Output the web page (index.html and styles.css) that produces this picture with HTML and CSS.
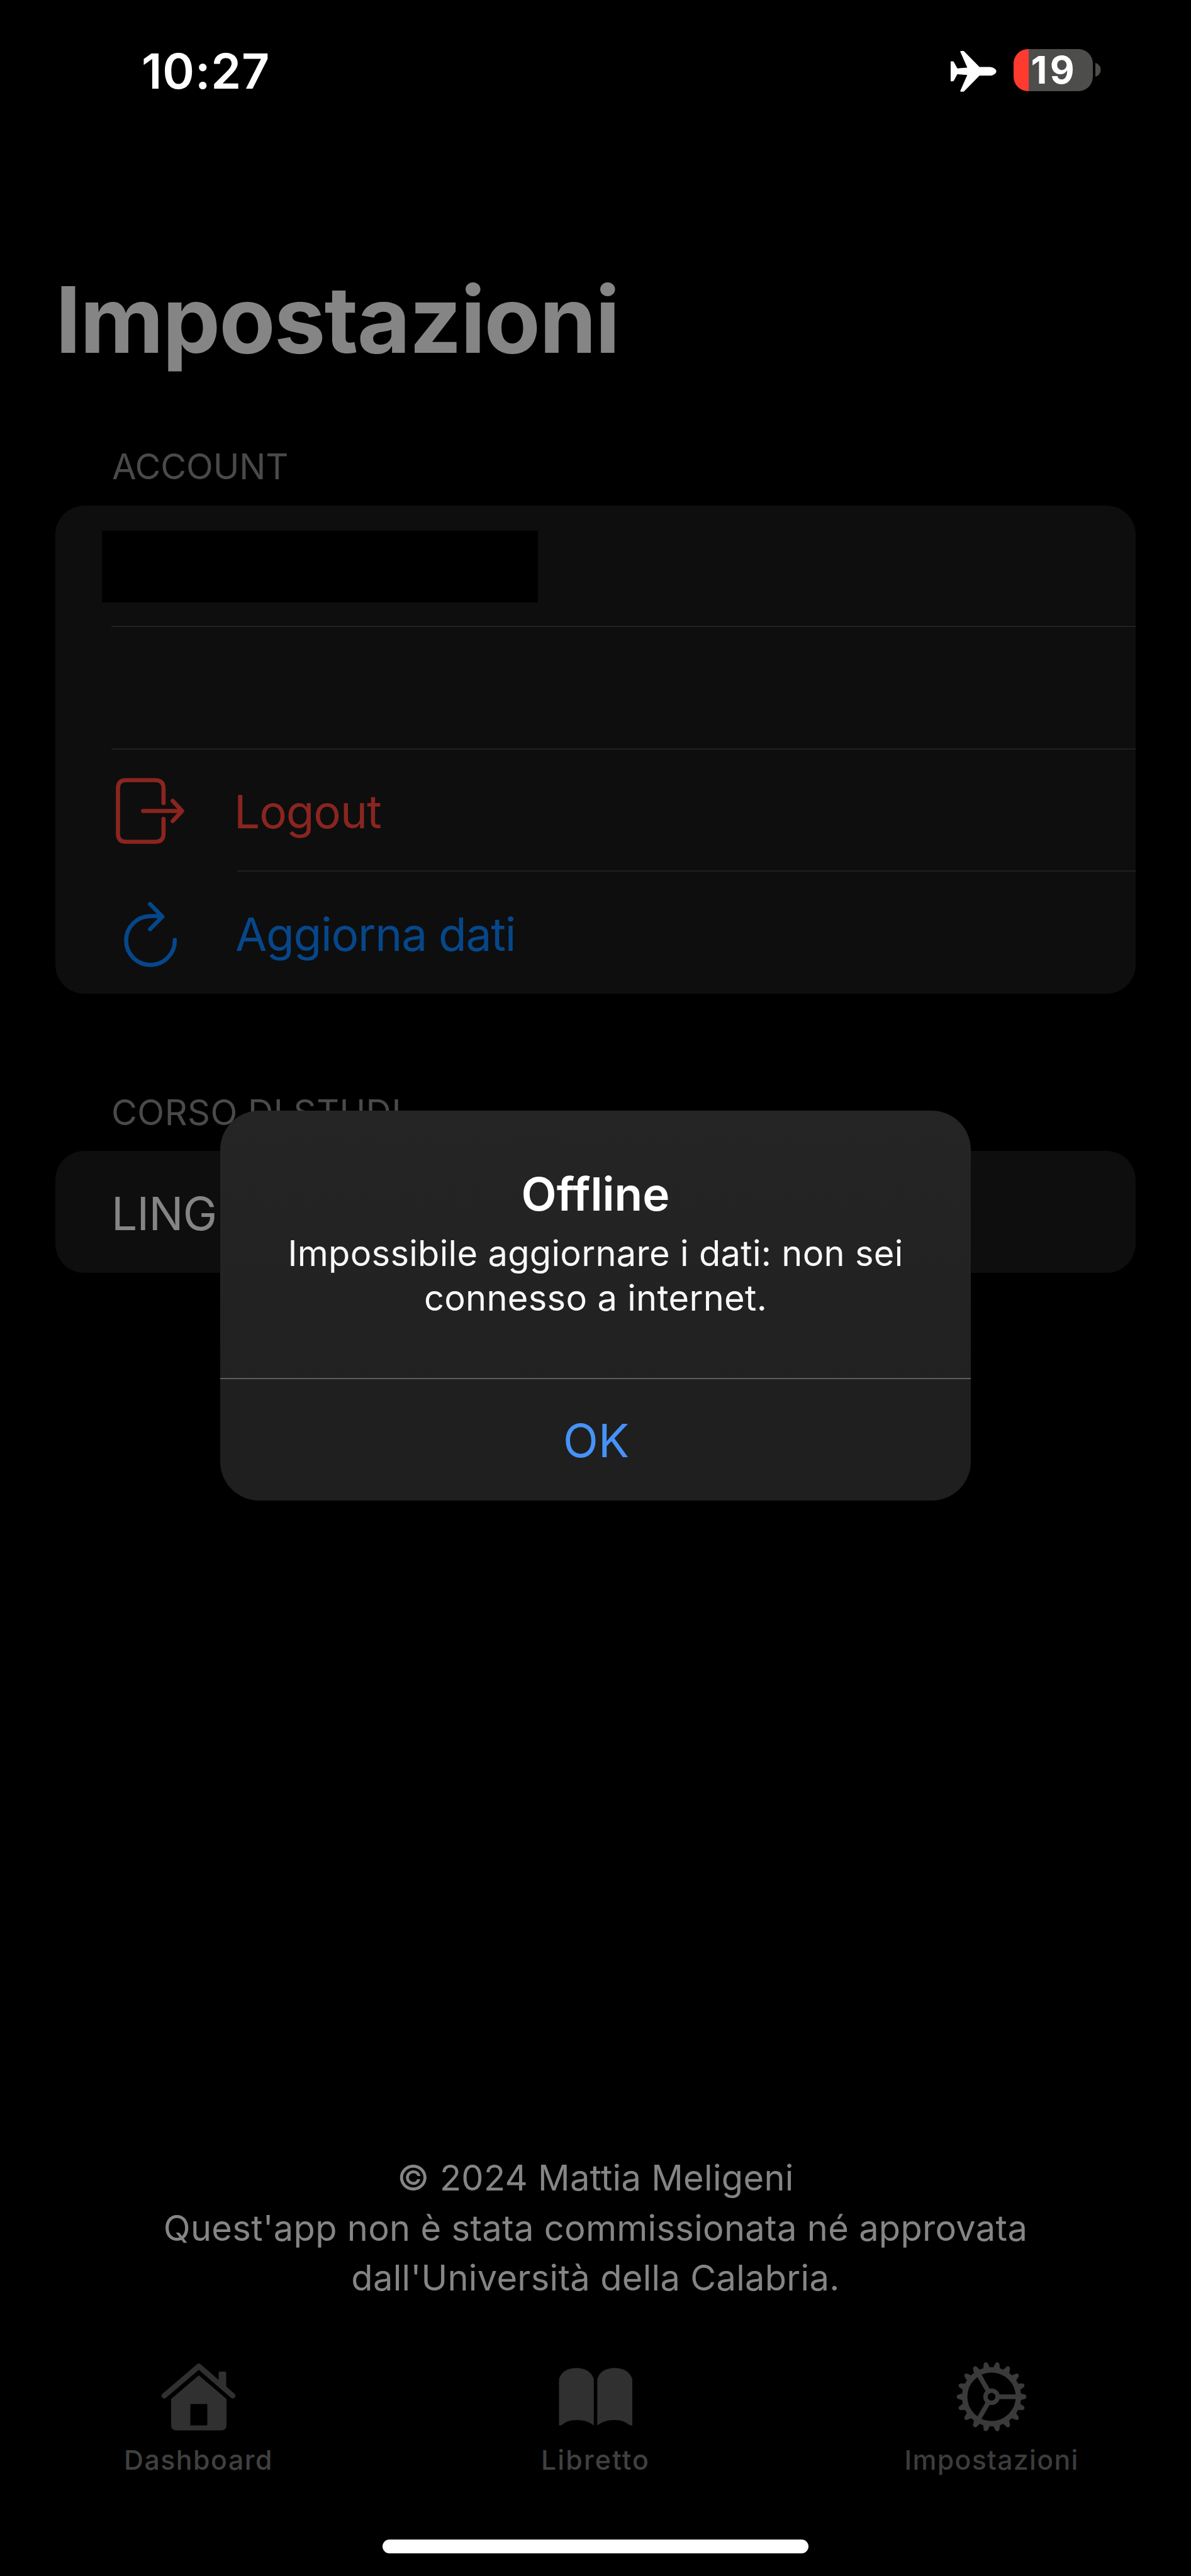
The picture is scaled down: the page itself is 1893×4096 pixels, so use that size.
FILE: index.html
```html
<!DOCTYPE html>
<html lang="it">
<head>
<meta charset="utf-8">
<title>Impostazioni</title>
<link rel="stylesheet" href="styles.css">
</head>
<body>
<div class="screen">
  <header class="status-bar">
    <span class="clock">10:27</span>
    <div class="status-icons">
      <svg class="plane" viewBox="0 0 73 65" aria-hidden="true">
        <path d="M0 16.6H3.4Q4.6 16.6 5.2 17.8L10.6 27.8L26.4 26.6L15.4 1.6Q15 0 16.6 0H19.8Q21.2 0 22 1.2L45.8 25.5H62C68 25.5 72.6 29.5 72.6 32.4C72.6 35.3 68 39.3 62 39.3H45.8L22 63.6Q21.2 64.8 19.8 64.8H16.6Q15 64.8 15.4 63.2L26.4 38.2L10.6 37L5.2 47Q4.6 48.2 3.4 48.2H0Z"/>
      </svg>
      <div class="battery"><span class="battery-level">19</span></div>
      <svg class="battery-cap" viewBox="0 0 9 22" aria-hidden="true"><path d="M0 0C5.500 2 8.500 6 8.500 11S5.500 20 0 22Z"/></svg>
    </div>
  </header>

  <main class="content">
    <h1 class="title">Impostazioni</h1>

    <h2 class="section-label account-label">ACCOUNT</h2>
    <ul class="card account-card">
      <li class="row row-name"><span class="redacted"></span></li>
      <li class="row row-empty"></li>
      <li class="row row-action logout">
        <svg class="row-icon" viewBox="0 0 120 120" aria-hidden="true">
          <path d="M82.900 57V33.500Q82.900 20.500 70 20.500H23Q10.500 20.500 10.500 33.500V105.500Q10.500 118.500 23 118.500H70Q82.900 118.500 82.900 105.500V82M50.500 69.500H112M97.500 53.500L112.500 69.500L97.500 85.500" transform="translate(0 -9)"/>
        </svg>
        <span class="row-text">Logout</span>
      </li>
      <li class="row row-action refresh">
        <svg class="row-icon" viewBox="0 0 120 120" aria-hidden="true">
          <path d="M100.800 71.500A38.700 38.700 0 1 1 62.500 33.800Q71 32.800 79.500 35.200M61.500 14.500L81 34.500L61.500 54.500"/>
        </svg>
        <span class="row-text">Aggiorna dati</span>
      </li>
    </ul>

    <h2 class="section-label course-label">CORSO DI STUDI</h2>
    <div class="card course-card"><span class="course-name">LING</span></div>
  </main>

  <footer class="credits">
    <p>© 2024 Mattia Meligeni</p>
    <p>Quest'app non è stata commissionata né approvata</p>
    <p>dall'Università della Calabria.</p>
  </footer>

  <nav class="tabs">
    <div class="tab dashboard">
      <svg viewBox="0 0 120 120" aria-hidden="true">
        <path class="line" d="M5 59.500L60 12.500L114 59.500"/>
        <path d="M91.500 38V23Q91.500 21 93.500 21H101.500Q103.500 21 103.500 23V50Z"/>
        <path fill-rule="evenodd" d="M60 27L104 64.500V106Q104 114.500 95.500 114.500H24.500Q16 114.500 16 106V64.500ZM46.500 72.500V106.500H73.500V72.500Z"/>
      </svg>
      <span>Dashboard</span>
    </div>
    <div class="tab libretto">
      <svg viewBox="0 0 120 120" aria-hidden="true">
        <path d="M1.500 33C5 21.500 15 15.300 29 15.300S53.500 21.500 56.800 33V106.400C50.500 101.500 41 98 29.500 98S11.500 101 6.500 105.500Q5.500 106.400 4 106.400H1.500Z"/>
        <path d="M62.300 33C65.500 21.500 76 15.300 90 15.300S114.500 21.500 118 33V106.400H115.500Q114 106.400 113 105.500C107.500 101 101 98 89.500 98S69 101.500 62.300 106.400Z"/>
      </svg>
      <span>Libretto</span>
    </div>
    <div class="tab settings">
      <svg viewBox="-60 -60 120 120" aria-hidden="true">
        <defs><path id="tooth" d="M44 -6L53.500 -3.200Q55.500 -2 55.500 0T53.500 3.200L44 6Z"/></defs>
        <circle class="ring" r="42.700"/>
        <circle class="hub" r="9.700"/>
        <path class="spoke" d="M12 0H40M-6 -10.400L-21 -36.400M-6 10.400L-21 36.400"/>
        <use href="#tooth"/><use href="#tooth" transform="rotate(20)"/><use href="#tooth" transform="rotate(40)"/><use href="#tooth" transform="rotate(60)"/><use href="#tooth" transform="rotate(80)"/><use href="#tooth" transform="rotate(100)"/><use href="#tooth" transform="rotate(120)"/><use href="#tooth" transform="rotate(140)"/><use href="#tooth" transform="rotate(160)"/><use href="#tooth" transform="rotate(180)"/><use href="#tooth" transform="rotate(200)"/><use href="#tooth" transform="rotate(220)"/><use href="#tooth" transform="rotate(240)"/><use href="#tooth" transform="rotate(260)"/><use href="#tooth" transform="rotate(280)"/><use href="#tooth" transform="rotate(300)"/><use href="#tooth" transform="rotate(320)"/><use href="#tooth" transform="rotate(340)"/>
      </svg>
      <span>Impostazioni</span>
    </div>
  </nav>
  <div class="home-indicator"></div>

  <div class="alert" role="alertdialog">
    <div class="alert-body">
      <h3 class="alert-title">Offline</h3>
      <p class="alert-message">Impossibile aggiornare i dati: non sei<br>connesso a internet.</p>
    </div>
    <button class="alert-button" type="button">OK</button>
  </div>
</div>
</body>
</html>
```
FILE: styles.css
```css
* {
  box-sizing: border-box;
  margin: 0;
  padding: 0;
}

body {
  background: #000;
  font-family: Inter, "Liberation Sans", sans-serif;
}

.screen {
  position: relative;
  display: flex;
  flex-direction: column;
  width: 1893px;
  height: 4096px;
  overflow: hidden;
  background: #000;
}

/* Status bar */
.status-bar {
  display: flex;
  align-items: center;
  justify-content: space-between;
  height: 226px;
  padding: 0 143px 0 225px;
  color: #fff;
}

.clock {
  font-size: 77px;
  font-weight: 600;
  letter-spacing: 0.8px;
}

.status-icons {
  display: flex;
  align-items: center;
  padding-bottom: 4px;
}

.plane {
  width: 73px;
  height: 65px;
  margin: 4px 27px 0 0;
  fill: #fff;
}

.battery {
  display: flex;
  align-items: center;
  width: 126px;
  height: 67px;
  padding-left: 27.5px;
  border-radius: 23px;
  background: linear-gradient(to right, #ff3b30 24.5px, #4d4d4c 24.5px);
}

.battery-level {
  font-size: 60px;
  font-weight: 700;
  line-height: 67px;
  letter-spacing: 4.5px;
}

.battery-cap {
  width: 9px;
  height: 22px;
  margin-left: 4px;
  fill: #4d4d4c;
}

/* Settings list */
.content {
  padding: 202px 88px 0;
}

.title {
  padding-left: 0;
  color: #858585;
  font-size: 146px;
  font-weight: 700;
  line-height: 160px;
  letter-spacing: -2.01px;
}

.section-label {
  padding-left: 90px;
  color: #4a4a4c;
  font-size: 56px;
  font-weight: 400;
  line-height: 66px;
}

.account-label {
  margin: 121px 0 29px;
  letter-spacing: -0.17px;
}

.course-label {
  margin: 156px 0 28px;
  padding-left: 89px;
  letter-spacing: 0.45px;
}

.card {
  border-radius: 46px;
  background: #0e0e0e;
  list-style: none;
}

.account-card {
  display: grid;
  grid-template-rows: 193px 195px 194px 194px;
}

.row {
  display: flex;
  align-items: center;
  margin-left: 89px;
}

.row-name,
.row-empty {
  border-bottom: 2px solid #202021;
}

.redacted {
  width: 693px;
  height: 114px;
  margin: 2px 0 0 -15px;
  background: #000;
}

.row-icon {
  width: 120px;
  height: 120px;
  flex: none;
  fill: none;
  stroke: currentColor;
  stroke-width: 6.6;
  stroke-linecap: round;
  stroke-linejoin: round;
}

.row-text {
  display: flex;
  flex: 1;
  align-items: center;
  align-self: stretch;
  margin-left: 80px;
  padding-top: 5px;
  font-size: 73px;
}

.logout {
  color: #8a2520;
}

.logout .row-text {
  border-bottom: 2px solid #202021;
  text-indent: -5px;
  letter-spacing: -1.15px;
}

.refresh {
  color: #06478a;
}

.refresh .row-text {
  text-indent: -3px;
  letter-spacing: -1.28px;
}

.course-card {
  display: flex;
  align-items: center;
  height: 194px;
  padding: 4px 0 0 89px;
}

.course-name {
  color: #858585;
  font-size: 73px;
  letter-spacing: -0.69px;
}

/* Credits and tab bar */
.credits {
  margin-top: auto;
  margin-bottom: 87px;
  color: #858585;
  font-size: 56px;
  line-height: 79.65px;
  letter-spacing: 0.3px;
  text-align: center;
}

.tabs {
  display: grid;
  grid-template-columns: repeat(3, 1fr);
  height: 188px;
}

.tab {
  display: flex;
  flex-direction: column;
  align-items: center;
  gap: 16px;
  color: #404041;
  font-size: 42.8px;
  font-weight: 500;
  line-height: 52px;
}

.tab svg {
  width: 120px;
  height: 120px;
  fill: #303030;
}

.tab .line {
  fill: none;
  stroke: #303030;
  stroke-width: 8.5;
  stroke-linecap: round;
  stroke-linejoin: round;
}

.dashboard {
  letter-spacing: 1.53px;
}

.libretto {
  letter-spacing: 2.17px;
}

.settings {
  padding-right: 3px;
  color: #3c3c3d;
  letter-spacing: 1.33px;
}

.settings svg {
  margin-top: 1px;
  margin-bottom: -1px;
  fill: #3a3a3a;
}

.ring,
.hub,
.spoke {
  fill: none;
  stroke: #3a3a3a;
  stroke-width: 8.5;
}

.hub {
  stroke-width: 7;
}

.spoke {
  stroke-width: 7.5;
}

.home-indicator {
  align-self: center;
  width: 677px;
  height: 22px;
  margin: 100px 0 36px;
  border-radius: 11px;
  background: #fff;
}

/* Alert, floating over the list */
.alert {
  position: absolute;
  top: 1766px;
  left: 350px;
  display: flex;
  flex-direction: column;
  width: 1193px;
  height: 620px;
  border-radius: 62px;
  overflow: hidden;
  background: linear-gradient(#252525, #212121 424px, #1f1f1f 428px);
  text-align: center;
}

.alert-body {
  height: 425px;
  padding-top: 88px;
}

.alert-title {
  color: #fff;
  font-size: 73px;
  font-weight: 600;
  line-height: 90px;
}

.alert-message {
  margin-top: 14px;
  color: #f8f8f8;
  font-size: 56px;
  line-height: 71px;
  letter-spacing: 0.3px;
}

.alert-button {
  flex: 1;
  padding: 1px 0 0 2px;
  border: 0;
  border-top: 2px solid #5c5c5c;
  background: none;
  color: #4593f8;
  font: inherit;
  font-size: 73px;
}
```
